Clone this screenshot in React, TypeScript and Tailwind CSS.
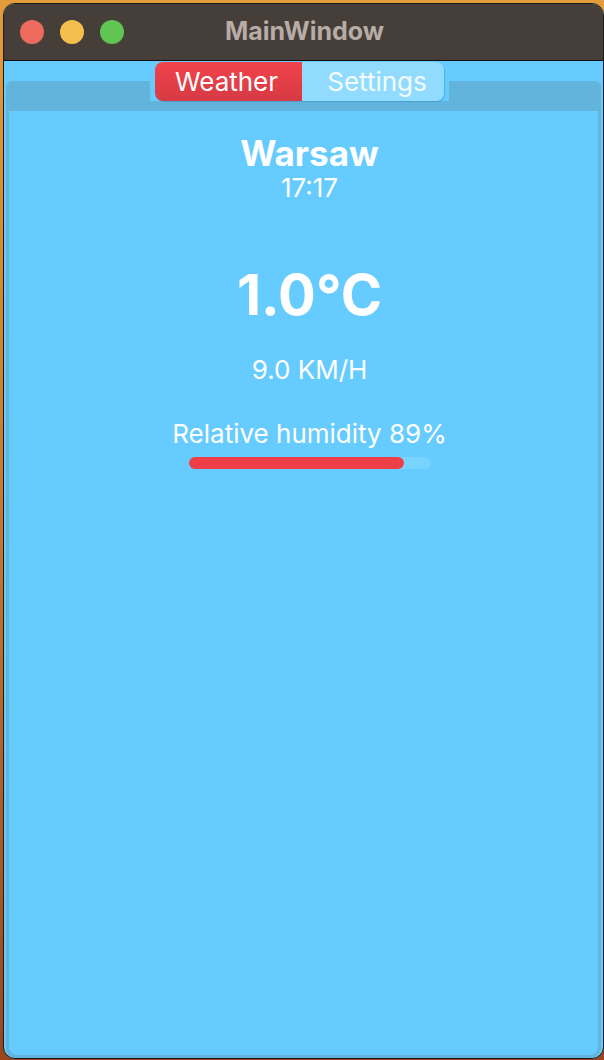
export default function App() {
  const humidity = 89;
  return (
    <div
      className="flex h-[1060px] w-[604px] overflow-hidden bg-gradient-to-b from-[#e39c3a] via-[#c7772c] to-[#9a461d] pl-[3px] pt-[3px]"
      style={{ fontFamily: "Inter, 'Noto Sans', sans-serif" }}
    >
      <div className="flex h-[1056px] w-[604px] flex-col overflow-hidden rounded-[12px] border border-[#1e1a18] bg-[#66ccff]">
        {/* Title bar */}
        <div className="relative flex h-[57px] shrink-0 items-center justify-center border-b border-[#111] bg-[#463e39]">
          <div className="absolute left-[16px] top-[16px] flex gap-[16px]">
            <span className="h-[24px] w-[24px] rounded-full bg-[#ee6a5f]" />
            <span className="h-[24px] w-[24px] rounded-full bg-[#f5bf4f]" />
            <span className="h-[24px] w-[24px] rounded-full bg-[#61c554]" />
          </div>
          <span className="ml-[2px] text-[25px] font-bold text-[#b7aca6]">MainWindow</span>
        </div>

        {/* Body */}
        <div className="flex flex-1 flex-col pl-[2px] pr-[2px]">
          <div className="relative z-10 flex justify-center pr-[8px]">
            <div className="flex bg-[#66ccff] px-[5px] pt-[1px]">
              <div className="flex h-[39px] overflow-hidden rounded-[8px] shadow-[1px_1px_1px_rgba(40,120,170,0.35)]">
                <div className="flex w-[147px] items-center justify-center bg-gradient-to-b from-[#f2434b] to-[#d63a44] pr-[4px] text-[26px] text-white">
                  Weather
                </div>
                <div className="flex w-[142px] items-center justify-center bg-[#91dbff] pl-[8px] text-[26px] text-[#f2fbff]">
                  Settings
                </div>
              </div>
            </div>
          </div>

          <div className="-mt-[20px] flex flex-1 flex-col rounded-t-[6px] rounded-b-[10px] bg-[#62b4dc] px-[3px] pb-[3px] pt-[30px]">
            <div className="flex flex-1 flex-col items-center rounded-b-[8px] bg-[#66ccff] pl-[12px] pt-[22px] text-white">
              <div className="text-[35px] font-bold leading-[40px]">Warsaw</div>
              <div className="text-[26px] leading-[30px]">17:17</div>
              <div className="mt-[58px] text-[56px] font-bold leading-[68px]">1.0°C</div>
              <div className="mt-[26px] text-[26px] leading-[30px]">9.0 KM/H</div>
              <div className="mt-[34px] text-[26px] leading-[30px]">Relative humidity 89%</div>
              <div className="mt-[8px] h-[12px] w-[242px] rounded-full bg-[#78d3ff]">
                <div
                  className="h-full rounded-full bg-[#ee3f48]"
                  style={{ width: `${humidity}%` }}
                />
              </div>
            </div>
          </div>
        </div>
      </div>
    </div>
  );
}
